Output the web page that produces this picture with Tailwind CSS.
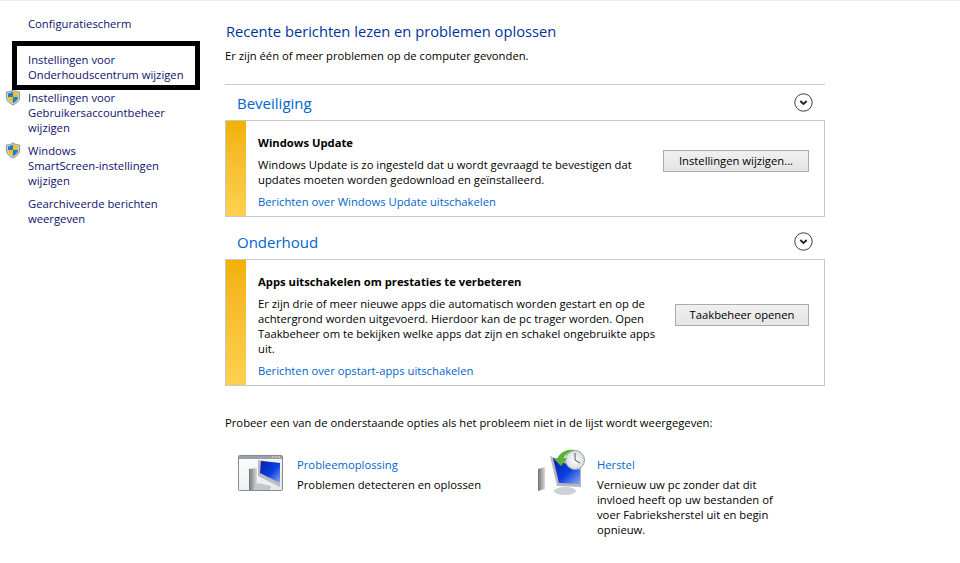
<!DOCTYPE html>
<html lang="nl">
<head>
<meta charset="utf-8">
<title>Onderhoudscentrum</title>
<script src="https://cdn.jsdelivr.net/npm/@tailwindcss/browser@4"></script>
</head>
<body class="bg-white w-[960px] h-[563px] overflow-hidden relative font-['Open_Sans','Noto_Sans',sans-serif] text-[11.25px] leading-[15px] text-black">
<svg width="0" height="0" class="absolute">
    <defs>
        <g id="shield">
            <path d="M8 .8 C10 2.4 12 3 14.6 3 V8 C14.6 11.6 12 14.2 8 16 C4 14.2 1.4 11.6 1.4 8 V3 C4 3 6 2.4 8 .8Z" fill="#c9ced6" stroke="#7f8894" stroke-width=".9"/>
            <path d="M8 2.6 C9.6 3.7 11.2 4.3 13 4.4 V8 H8Z" fill="#f4c20d"/>
            <path d="M8 2.6 V8 H3 V4.4 C4.8 4.3 6.4 3.7 8 2.6Z" fill="#1f78d1"/>
            <path d="M3 8 H8 V14.2 C5 12.8 3.2 10.8 3 8Z" fill="#f4c20d"/>
            <path d="M8 8 H13 C12.8 10.8 11 12.8 8 14.2Z" fill="#1f78d1"/>
        </g>
        <g id="chevron">
            <circle cx="9.5" cy="9.5" r="8.7" fill="#fff" stroke="#3c3c3c" stroke-width="1"/>
            <path d="M6.3 8 L9.5 11 L12.7 8" fill="none" stroke="#222" stroke-width="1.8"/>
        </g>
        <linearGradient id="screen" x1="0" y1="0" x2="1" y2="1">
            <stop offset="0" stop-color="#0a1fa8"/>
            <stop offset=".55" stop-color="#0b3fe0"/>
            <stop offset="1" stop-color="#8fa8ee"/>
        </linearGradient>
        <linearGradient id="tower" x1="0" y1="0" x2="1" y2="0">
            <stop offset="0" stop-color="#6f7478"/>
            <stop offset="1" stop-color="#d9dbdd"/>
        </linearGradient>
        <linearGradient id="pane" x1="0" y1="0" x2="1" y2="1">
            <stop offset="0" stop-color="#ffffff"/>
            <stop offset="1" stop-color="#e4e6e8"/>
        </linearGradient>
        <radialGradient id="clockface">
            <stop offset="0" stop-color="#ffffff"/>
            <stop offset="1" stop-color="#d6dce2"/>
        </radialGradient>
    </defs>
</svg>

<div class="h-px bg-[#ececec]"></div>

<div class="flex">
    <!-- linker kolom -->
    <aside class="w-[225px] shrink-0 pl-[28px] pr-[30px] pt-[15px] text-[#10106e]">
        <a class="block mb-[21px]">Configuratiescherm</a>
        <a class="block mb-[8px]">Instellingen voor<br>Onderhoudscentrum wijzigen</a>
        <a class="block mb-[8px] relative">
            <svg class="absolute left-[-23px] top-[-1px]" width="16" height="17" viewBox="0 0 16 17"><use href="#shield"/></svg>
            Instellingen voor<br>Gebruikersaccountbeheer<br>wijzigen
        </a>
        <a class="block mb-[8px] relative">
            <svg class="absolute left-[-23px] top-[-1px]" width="16" height="17" viewBox="0 0 16 17"><use href="#shield"/></svg>
            Windows<br>SmartScreen-instellingen<br>wijzigen
        </a>
        <a class="block">Gearchiveerde berichten<br>weergeven</a>
    </aside>

    <!-- hoofdgedeelte -->
    <main class="w-[600px] pt-[20px]">
        <h1 class="text-[14.7px] leading-[20px] text-[#003399] pl-px">Recente berichten lezen en problemen oplossen</h1>
        <p class="mt-[7px]">Er zijn één of meer problemen op de computer gevonden.</p>

        <section class="mt-[21px] border-t border-[#c8c8c8]">
            <div class="flex items-center justify-between h-[35px] pl-[12px] pr-[12px]">
                <h2 class="text-[15px] text-[#0066cc] pt-[2px]">Beveiliging</h2>
                <svg width="19" height="19" viewBox="0 0 19 19"><use href="#chevron"/></svg>
            </div>
            <div class="flex h-[97px] border border-[#c8c8c8]">
                <div class="w-[20px] shrink-0 bg-gradient-to-b from-[#f2b100] to-[#ffd04f]"></div>
                <div class="pl-[12px] pt-[14px] w-[405px] shrink-0">
                    <h3 class="font-bold">Windows Update</h3>
                    <p class="mt-[7px] w-[395px]">Windows Update is zo ingesteld dat u wordt gevraagd te bevestigen dat updates moeten worden gedownload en geïnstalleerd.</p>
                    <a class="block mt-[7px] text-[#0066cc]">Berichten over Windows Update uitschakelen</a>
                </div>
                <div class="flex-1 flex justify-end items-start pr-[15px] pt-[29px]">
                    <button class="h-[22px] w-[146px] pb-px border border-[#acacac] bg-gradient-to-b from-[#f0f0f0] to-[#e5e5e5]">Instellingen wijzigen...</button>
                </div>
            </div>
        </section>

        <section>
            <div class="flex items-center justify-between h-[42px] pl-[12px] pr-[12px] pt-[7px]">
                <h2 class="text-[15px] text-[#0066cc] pt-[2px]">Onderhoud</h2>
                <svg width="19" height="19" viewBox="0 0 19 19"><use href="#chevron"/></svg>
            </div>
            <div class="flex h-[127px] border border-[#c8c8c8]">
                <div class="w-[20px] shrink-0 bg-gradient-to-b from-[#f2b100] to-[#ffd04f]"></div>
                <div class="pl-[12px] pt-[14px] w-[420px] shrink-0">
                    <h3 class="font-bold">Apps uitschakelen om prestaties te verbeteren</h3>
                    <p class="mt-[7px] w-[402px]">Er zijn drie of meer nieuwe apps die automatisch worden gestart en op de achtergrond worden uitgevoerd. Hierdoor kan de pc trager worden. Open Taakbeheer om te bekijken welke apps dat zijn en schakel ongebruikte apps uit.</p>
                    <a class="block mt-[7px] text-[#0066cc]">Berichten over opstart-apps uitschakelen</a>
                </div>
                <div class="flex-1 flex justify-end items-start pr-[15px] pt-[44px]">
                    <button class="h-[22px] w-[134px] pb-px border border-[#acacac] bg-gradient-to-b from-[#f0f0f0] to-[#e5e5e5]">Taakbeheer openen</button>
                </div>
            </div>
        </section>

        <p class="mt-[29px]">Probeer een van de onderstaande opties als het probleem niet in de lijst wordt weergegeven:</p>

        <div class="flex mt-[21px]">
            <div class="flex w-[300px] pl-[13px]">
                <svg class="shrink-0 mt-[3px]" width="46" height="38" viewBox="0 0 46 38">
                    <rect x=".5" y="1.5" width="44" height="35" rx="1" fill="url(#pane)" stroke="#858a91"/>
                    <rect x="1" y="2" width="43" height="3" fill="#9a9fa6"/>
                    <rect x="34" y="2.5" width="2" height="1" fill="#dfe3e8"/>
                    <rect x="37" y="2.5" width="2" height="1" fill="#dfe3e8"/>
                    <rect x="40" y="2.5" width="2" height="1" fill="#dfe3e8"/>
                    <path d="M11 15 L19 14 V36 H11Z" fill="url(#tower)"/>
                    <path d="M15 36 L20 29 L33 32 L32 36Z" fill="#c3c6c9"/>
                    <path d="M20 6 L42 9 V33 L20 22Z" fill="#b9bdc1"/>
                    <path d="M23 7 L42 9 V29 L22 19Z" fill="url(#screen)"/>
                    <rect x="12" y="17" width="1.5" height="2.5" fill="#4fc04f"/>
                </svg>
                <div class="pl-[13px] pt-[6px]">
                    <a class="block text-[#0066cc]">Probleemoplossing</a>
                    <p class="mt-[5px]">Problemen detecteren en oplossen</p>
                </div>
            </div>
            <div class="flex">
                <svg class="shrink-0 ml-[12px] -mt-[3px]" width="50" height="48" viewBox="0 0 50 48">
                    <path d="M1 21 L8 19 V41 L1 43Z" fill="url(#tower)"/>
                    <ellipse cx="28" cy="43" rx="11" ry="4" fill="#cfd1d4"/>
                    <path d="M13 8 L44 20 V39 L20 38Z" fill="#b4b8bc"/>
                    <path d="M16 10 L43 22 V36 L22 35Z" fill="url(#screen)"/>
                    <circle cx="38" cy="12" r="9.5" fill="url(#clockface)" stroke="#9aa0a6"/>
                    <path d="M38 5 V12 L43 15" fill="none" stroke="#555" stroke-width="1"/>
                    <path d="M24 18 L17 11 L20.5 10 C24 3 31 1 38 2 C32 4 28.500 6 27 10 L30 10.500Z" fill="#5db33a"/>
                </svg>
                <div class="pl-[10px] pt-[6px] w-[200px]">
                    <a class="block text-[#0066cc]">Herstel</a>
                    <p class="mt-[5px]">Vernieuw uw pc zonder dat dit invloed heeft op uw bestanden of voer Fabrieksherstel uit en begin opnieuw.</p>
                </div>
            </div>
        </div>
    </main>
</div>

<!-- zwart kader als markering over de zijbalk -->
<div class="absolute left-[12px] top-[41px] w-[188px] h-[49px] border-[5px] border-black"></div>
</body>
</html>
